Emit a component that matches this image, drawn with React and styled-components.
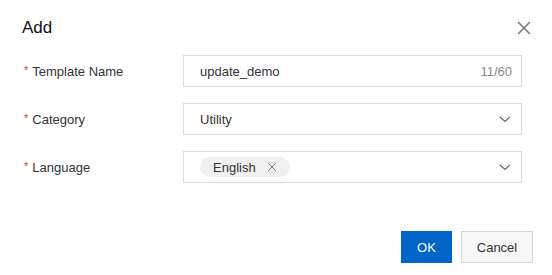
import React from 'react';
import styled, { createGlobalStyle } from 'styled-components';

const Global = createGlobalStyle`
  html, body {
    margin: 0;
    padding: 0;
    background: #fff;
  }
  body {
    font-family: 'Liberation Sans', Arial, sans-serif;
    color: #333;
  }
`;

const Dialog = styled.div`
  width: 552px;
  height: 275px;
  box-sizing: border-box;
  background: #fff;
  display: flex;
  flex-direction: column;
`;

const Header = styled.div`
  display: flex;
  align-items: center;
  justify-content: space-between;
  height: 55px;
  padding: 1px 20px 0 22px;
  box-sizing: border-box;
`;

const Title = styled.div`
  font-size: 17px;
  color: #111;
`;

const Close = styled.button`
  border: none;
  background: none;
  padding: 0;
  width: 16px;
  height: 16px;
  display: flex;
  align-items: center;
  justify-content: center;
  cursor: pointer;
`;

const Form = styled.div`
  display: flex;
  flex-direction: column;
  gap: 16px;
  padding: 0 30px 0 24px;
`;

const Row = styled.div`
  display: flex;
  align-items: center;
  height: 32px;
`;

const Label = styled.div`
  width: 159px;
  font-size: 13px;
  color: #333;
  display: flex;
  align-items: center;

  &::before {
    content: '*';
    color: #d93026;
    margin-right: 4px;
    font-size: 11px;
    position: relative;
    top: -1px;
  }
`;

const Field = styled.div`
  flex: 1;
  height: 32px;
  box-sizing: border-box;
  border: 1px solid #dcdcdc;
  display: flex;
  align-items: center;
  padding: 0 9px 0 16px;
  font-size: 13px;
  color: #333;
`;

const Value = styled.div`
  flex: 1;
`;

const Counter = styled.span`
  color: #888;
  font-size: 13px;
`;

const Tag = styled.span`
  display: inline-flex;
  align-items: center;
  gap: 11px;
  height: 20px;
  padding: 0 13px;
  border-radius: 10px;
  background: #f0f0f0;
  color: #333;
  font-size: 13px;
`;

const Footer = styled.div`
  margin-top: auto;
  display: flex;
  justify-content: flex-end;
  gap: 9px;
  padding: 0 19px 12px 0;
`;

const Button = styled.button`
  width: ${(p) => (p.$primary ? '51px' : '72px')};
  height: 32px;
  box-sizing: border-box;
  font-family: inherit;
  font-size: 13px;
  padding: 0;
  border: 1px solid ${(p) => (p.$primary ? '#0064c8' : '#d6d6d6')};
  background: ${(p) => (p.$primary ? '#0064c8' : '#f7f7f7')};
  color: ${(p) => (p.$primary ? '#fff' : '#333')};
  cursor: pointer;
`;

const Chevron = () => (
  <svg width="14" height="14" viewBox="0 0 14 14">
    <path d="M2 5 L7 9.5 L12 5" fill="none" stroke="#666" strokeWidth="1.2" />
  </svg>
);

const XIcon = ({ size, color, w }) => (
  <svg width={size} height={size} viewBox="0 0 16 16">
    <path d="M2 2 L14 14 M14 2 L2 14" stroke={color} strokeWidth={w} fill="none" />
  </svg>
);

export default function App() {
  return (
    <>
      <Global />
      <Dialog>
        <Header>
          <Title>Add</Title>
          <Close aria-label="close">
            <XIcon size={16} color="#777" w={1.5} />
          </Close>
        </Header>
        <Form>
          <Row>
            <Label>Template Name</Label>
            <Field>
              <Value>update_demo</Value>
              <Counter>11/60</Counter>
            </Field>
          </Row>
          <Row>
            <Label>Category</Label>
            <Field>
              <Value>Utility</Value>
              <Chevron />
            </Field>
          </Row>
          <Row>
            <Label>Language</Label>
            <Field>
              <Value>
                <Tag>
                  English
                  <XIcon size={10} color="#777" w={1.6} />
                </Tag>
              </Value>
              <Chevron />
            </Field>
          </Row>
        </Form>
        <Footer>
          <Button $primary>OK</Button>
          <Button>Cancel</Button>
        </Footer>
      </Dialog>
    </>
  );
}
